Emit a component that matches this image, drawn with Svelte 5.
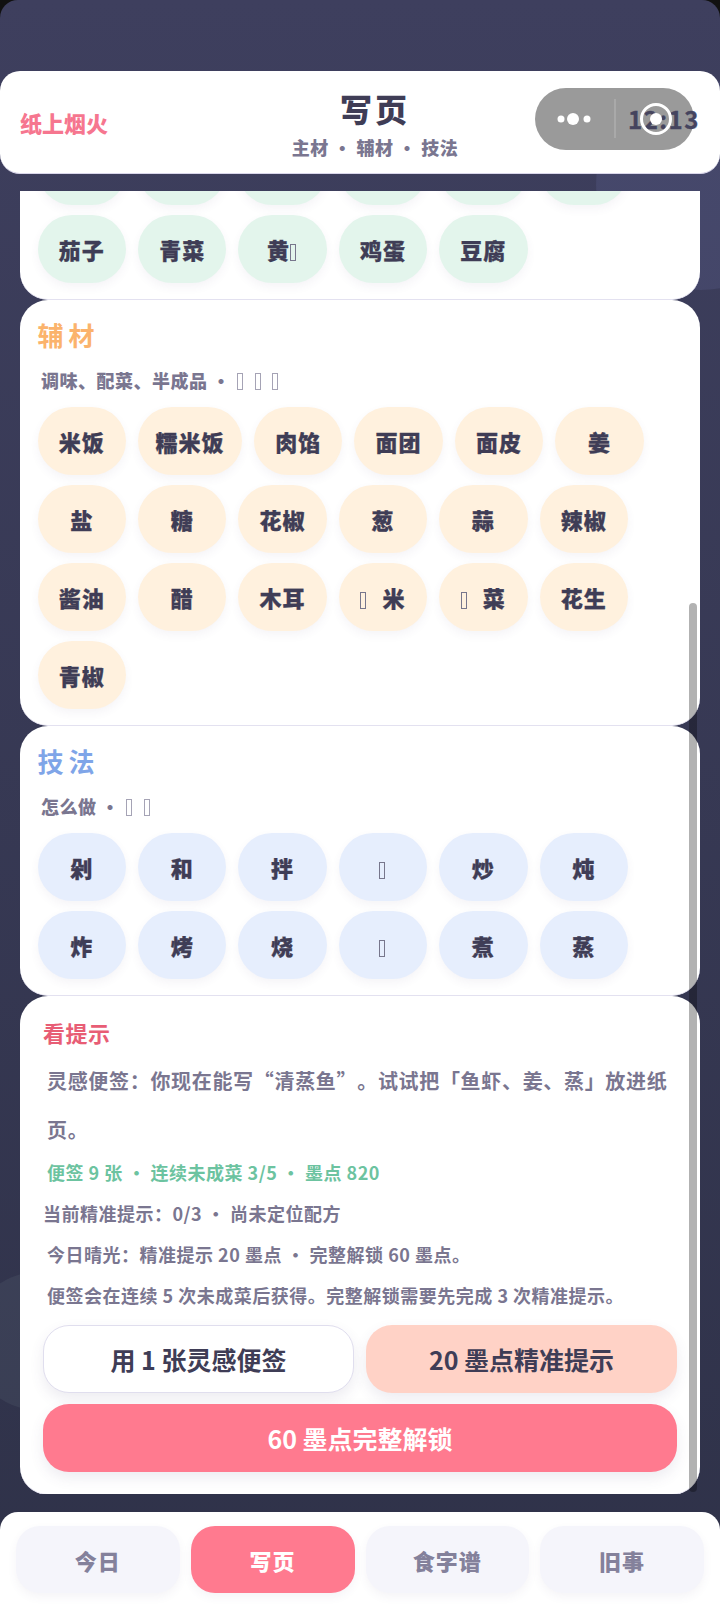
<script>
  const T = '□';
  const main = ['', '', '', '', '', '', '茄子', '青菜', `黄${T}`, '鸡蛋', '豆腐'];
  const side = ['米饭', '糯米饭', '肉馅', '面团', '面皮', '姜', '盐', '糖', '花椒', '葱', '蒜', '辣椒', '酱油', '醋', '木耳', `${T} 米`, `${T} 菜`, '花生', '青椒'];
  const skill = ['剁', '和', '拌', T, '炒', '炖', '炸', '烤', '烧', T, '煮', '蒸'];
  const tabs = ['今日', '写页', '食字谱', '旧事'];
</script>

{#snippet label(text)}
  <span>{#each text.split('') as c, i}{#if c === T}<i class="tofu" class:wide={text[i + 1] === ' '}></i>{:else}{c}{/if}{/each}</span>
{/snippet}

<div class="page">
  <div class="blob right"></div>
  <div class="blob left"></div>

  <header class="top">
    <div class="logo">纸上烟火</div>
    <div class="mid">
      <div class="title">写页</div>
      <div class="crumb">主材 · 辅材 · 技法</div>
    </div>
    <div class="capsule">
      <div class="time">12:13</div>
      <svg width="159" height="62" viewBox="0 0 159 62">
        <circle cx="26" cy="31" r="3.5" fill="#fff" />
        <circle cx="38" cy="31" r="6" fill="#fff" />
        <circle cx="52" cy="31" r="3.5" fill="#fff" />
        <rect x="79.5" y="11" width="1" height="39" fill="#fff" fill-opacity="0.3" />
        <circle cx="121" cy="31" r="14.5" fill="none" stroke="#fff" stroke-width="3" />
        <circle cx="121" cy="31" r="6" fill="#fff" />
      </svg>
    </div>
  </header>

  <main class="scroll">
    <section class="card clip">
      <div class="pills">
        {#each main as p}<div class="pill green">{@render label(p)}</div>{/each}
      </div>
    </section>

    <section class="card">
      <h2 class="orange">辅材</h2>
      <p class="sub">{@render label(`调味、配菜、半成品 · ${T} ${T} ${T}`)}</p>
      <div class="pills">
        {#each side as p}<div class="pill peach">{@render label(p)}</div>{/each}
      </div>
    </section>

    <section class="card">
      <h2 class="blue">技法</h2>
      <p class="sub">{@render label(`怎么做 · ${T} ${T}`)}</p>
      <div class="pills">
        {#each skill as p}<div class="pill sky">{@render label(p)}</div>{/each}
      </div>
    </section>

    <section class="card hint">
      <h3>看提示</h3>
      <p class="tip">灵感便签：你现在能写“清蒸鱼”。试试把「鱼虾、姜、蒸」放进纸页。</p>
      <p class="line mint">便签 9 张 · 连续未成菜 3/5 · 墨点 820</p>
      <p class="line flush">当前精准提示：0/3 · 尚未定位配方</p>
      <p class="line">今日晴光：精准提示 20 墨点 · 完整解锁 60 墨点。</p>
      <p class="line">便签会在连续 5 次未成菜后获得。完整解锁需要先完成 3 次精准提示。</p>
      <div class="btns">
        <button class="btn plain">用 1 张灵感便签</button>
        <button class="btn soft">20 墨点精准提示</button>
        <button class="btn hot">60 墨点完整解锁</button>
      </div>
    </section>

    <div class="thumb"></div>
  </main>

  <nav class="tabs">
    {#each tabs as t, i}
      <span class="tab" class:on={i === 1}>{t}</span>
    {/each}
  </nav>
</div>

<style>
  :global(body) {
    background: #111;
  }

  .page {
    width: 720px;
    height: 1608px;
    overflow: hidden;
    position: relative;
    border-radius: 18px 18px 0 0;
    background: linear-gradient(180deg, #3e3f5e 0%, #2f3249 100%);
    font-family: "Noto Sans CJK SC", "Noto Sans", sans-serif;
    font-weight: 900;
    color: #3f3d56;
    text-spacing-trim: space-all;
  }

  .blob {
    position: absolute;
    border-radius: 50%;
  }

  .blob.right {
    left: 596px;
    top: 80px;
    width: 210px;
    height: 210px;
    background: rgba(130, 140, 210, 0.13);
  }

  .blob.left {
    left: -31px;
    top: 1272px;
    width: 138px;
    height: 138px;
    background: rgba(190, 210, 210, 0.07);
  }

  .top {
    position: absolute;
    left: 0;
    right: 0;
    top: 71px;
    height: 103px;
    background: #fff;
    border-radius: 20px;
    border-bottom: 1px solid #d9d6ea;
    box-sizing: border-box;
  }

  .logo {
    position: absolute;
    left: 20px;
    top: 35px;
    font-size: 22px;
    line-height: 32px;
    color: #f6768f;
  }

  .mid {
    text-align: center;
    padding-top: 17px;
    padding-left: 30px;
  }

  .title {
    font-size: 32px;
    line-height: 40px;
    letter-spacing: 3px;
  }

  .crumb {
    font-size: 18px;
    line-height: 26px;
    margin-top: 6px;
    letter-spacing: 0.5px;
    color: #7a7690;
  }

  .capsule {
    position: absolute;
    left: 535px;
    top: 17px;
    width: 159px;
    height: 62px;
    border-radius: 31px;
    background: #9a9a9a;
  }

  .capsule svg {
    display: block;
    position: relative;
  }

  .time {
    position: absolute;
    left: 93px;
    top: 13px;
    font-size: 24px;
    font-weight: 700;
    line-height: 36px;
    letter-spacing: 1.5px;
    color: #45445e;
    -webkit-text-stroke: 0.3px #45445e;
  }

  .scroll {
    position: absolute;
    left: 20px;
    right: 20px;
    top: 191px;
    height: 1303px;
    overflow: hidden;
  }

  .card {
    background: #fff;
    border-radius: 28px;
    border-bottom: 1px solid #e3e1f0;
    box-sizing: border-box;
    padding: 17px 17.6px 16px;
  }

  .clip {
    margin-top: -84px;
    padding: 16px 17.6px 14px;
    height: 193px;
  }

  h2 {
    margin: 0;
    font-size: 26px;
    line-height: 36px;
    letter-spacing: 5px;
  }

  .orange { color: #fbb36c; }
  .blue { color: #7fa5e8; }

  .sub {
    margin: 14px 0 0 3.4px;
    font-size: 18px;
    line-height: 26px;
    letter-spacing: 0.5px;
    color: #7a7690;
  }

  .pills {
    display: flex;
    flex-wrap: wrap;
    gap: 10px 12px;
    margin-top: 14px;
  }

  .pill {
    min-width: 88.4px;
    height: 68px;
    padding: 0 17.5px;
    box-sizing: border-box;
    border-radius: 34px;
    display: flex;
    align-items: center;
    justify-content: center;
    font-size: 22px;
    letter-spacing: 1px;
    -webkit-text-stroke: 0.3px #3f3d56;
    box-shadow: 0 4px 10px rgba(80, 70, 120, 0.06);
  }

  .green { background: #e3f5ec; }
  .peach { background: #fff1de; }
  .sky { background: #e6eefd; }

  .tofu {
    display: inline-block;
    width: 6px;
    height: 17px;
    margin: 0 2px 0 0;
    box-sizing: border-box;
    border: 1px solid #77768c;
    vertical-align: -2px;
    -webkit-text-stroke: 0;
  }

  .tofu.wide {
    margin-right: 10px;
  }

  .sub .tofu {
    margin: 0 5px 0 2px;
    border-color: #a5a3b5;
  }

  .hint {
    padding: 20px 23px 22px 23px;
    height: 499px;
  }

  h3 {
    margin: 0;
    font-size: 22px;
    line-height: 32px;
    letter-spacing: 0.5px;
    color: #e85d75;
  }

  .tip {
    margin: 8px 0 0 4px;
    font-size: 20px;
    font-weight: 700;
    line-height: 49px;
    letter-spacing: 0.68px;
    color: #7a7690;
  }

  .line {
    margin: 0 0 0 4px;
    font-size: 18px;
    font-weight: 700;
    line-height: 41px;
    letter-spacing: 0.5px;
    color: #7a7690;
  }

  .flush { margin-left: 0; }
  .mint { color: #6cc3a0; margin-top: -2px; }

  .btns {
    display: grid;
    grid-template-columns: 1fr 1fr;
    gap: 11px 12px;
    margin-top: 9px;
  }

  .btn {
    height: 68px;
    border: 0;
    border-radius: 26px;
    font: inherit;
    font-size: 25px;
    font-weight: 700;
    color: #3f3d56;
    box-shadow: 0 6px 14px rgba(80, 70, 120, 0.1);
  }

  .plain { background: #fff; border: 1px solid #e0deee; }
  .soft { background: #ffd2c6; }
  .hot { background: #ff7a8f; color: #fff; grid-column: 1 / 3; }

  .thumb {
    position: absolute;
    right: 3px;
    top: 412px;
    width: 8px;
    height: 889px;
    border-radius: 4px;
    background: rgba(0, 0, 0, 0.3);
  }

  .tabs {
    position: absolute;
    left: 0;
    right: 0;
    top: 1512px;
    height: 96px;
    box-sizing: border-box;
    background: #fff;
    border-radius: 18px 18px 0 0;
    padding: 14px 16px 15px;
    display: grid;
    grid-template-columns: repeat(4, 1fr);
    gap: 11px;
  }

  .tab {
    border-radius: 24px;
    background: #f5f5fb;
    color: #84819b;
    font-size: 22px;
    letter-spacing: 1px;
    display: flex;
    align-items: center;
    justify-content: center;
    box-shadow: 0 4px 10px rgba(80, 70, 120, 0.06);
  }

  .on {
    background: #ff7a8f;
    color: #fff;
  }
</style>
